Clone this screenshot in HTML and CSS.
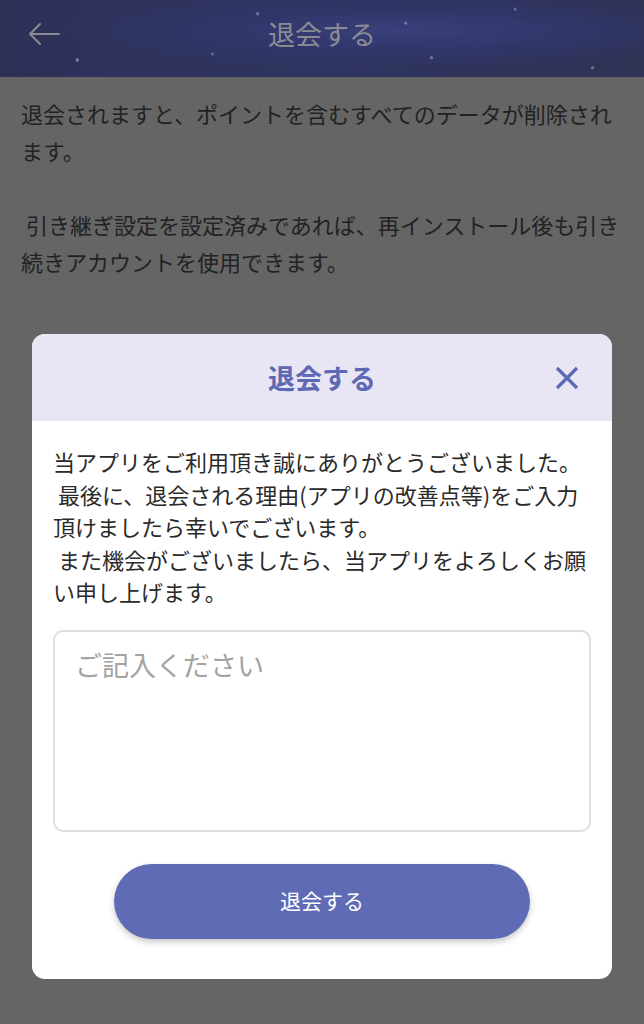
FILE: index.html
```html
<!DOCTYPE html>
<html lang="ja">
<head>
  <meta charset="UTF-8" />
  <meta name="viewport" content="width=device-width, initial-scale=1.0"/>
  <title>退会する</title>
  <link rel="stylesheet" href="styles.css">
</head>
<body>
  <header class="topbar">
    <button class="back" aria-label="戻る">
      <svg width="34" height="26" viewBox="0 0 34 26">
        <path d="M32 13H3M13 3L3 13l10 10" fill="none" stroke="currentColor" stroke-width="2" stroke-linecap="round" stroke-linejoin="round"/>
      </svg>
    </button>
    <h1>退会する</h1>
  </header>

  <main class="notice">
    <p>退会されますと、ポイントを含むすべてのデータが削除されます。</p>
    <p>&nbsp;引き継ぎ設定を設定済みであれば、再インストール後も引き続きアカウントを使用できます。</p>
  </main>

  <div class="overlay">
    <div class="dialog">
      <div class="dialog-head">
        <h2>退会する</h2>
        <button class="close" aria-label="閉じる">
          <svg width="24" height="24" viewBox="0 0 24 24">
            <path d="M2 2L22 22M22 2L2 22" fill="none" stroke="currentColor" stroke-width="3.2"/>
          </svg>
        </button>
      </div>
      <div class="dialog-body">
        <p>当アプリをご利用頂き誠にありがとうございました。<br>&nbsp;最後に、退会される理由(アプリの改善点等)をご入力<br>頂けましたら幸いでございます。<br>&nbsp;また機会がございましたら、当アプリをよろしくお願<br>い申し上げます。</p>
        <textarea placeholder="ご記入ください"></textarea>
        <button class="submit">退会する</button>
      </div>
    </div>
  </div>
</body>
</html>
```

FILE: styles.css
```css
body {
  font-family: "Noto Sans CJK JP", "Noto Sans", sans-serif;
  margin: 0;
  background: #656565;
  color: #222;
}
button {
  font-family: inherit;
  border: none;
  background: none;
  padding: 0;
  cursor: pointer;
}

/* top bar (dimmed behind the dialog) */
.topbar {
  height: 67px;
  padding-bottom: 10px;
  display: flex;
  align-items: center;
  justify-content: center;
  position: relative;
  background:
    radial-gradient(circle at 12% 78%, rgba(255,255,255,0.35) 0 1.5px, transparent 2px),
    radial-gradient(circle at 40% 18%, rgba(255,255,255,0.3) 0 1.2px, transparent 2px),
    radial-gradient(circle at 63% 30%, rgba(255,255,255,0.3) 0 1.2px, transparent 2px),
    radial-gradient(circle at 67% 75%, rgba(255,255,255,0.3) 0 1.2px, transparent 2px),
    radial-gradient(circle at 80% 12%, rgba(255,255,255,0.25) 0 1px, transparent 2px),
    radial-gradient(circle at 92% 88%, rgba(255,255,255,0.3) 0 1.2px, transparent 2px),
    radial-gradient(circle at 33% 70%, rgba(255,255,255,0.25) 0 1px, transparent 2px),
    radial-gradient(ellipse at 62% 40%, #39407a 0%, #31366a 30%, transparent 60%),
    linear-gradient(90deg, #2d3158 0%, #2f3460 50%, #2e3253 100%);
}
.topbar h1 {
  margin: 0;
  font-size: 27px;
  font-weight: 400;
  color: #8b8b93;
}
.back {
  position: absolute;
  left: 27px;
  top: 21px;
  color: #8a8a90;
}

.notice {
  padding: 18px 21px 0;
  font-size: 22px;
  line-height: 37px;
}
.notice p {
  margin: 0;
}
.notice p + p {
  margin-top: 37px;
}

/* dialog */
.overlay {
  position: fixed;
  inset: 0;
  padding: 334px 32px 0;
}
.dialog {
  background: #fff;
  border-radius: 13px;
  overflow: hidden;
}
.dialog-head {
  height: 87px;
  background: #e8e5f4;
  display: grid;
  grid-template-columns: 1fr auto 1fr;
  align-items: center;
}
.dialog-head h2 {
  grid-column: 2;
  margin: 0;
  font-size: 27px;
  font-weight: 700;
  color: #5e69b4;
}
.close {
  justify-self: end;
  margin-right: 33px;
  color: #5e69b4;
  display: flex;
}
.dialog-body {
  padding: 24px 21px 40px;
}
.dialog-body p {
  margin: 0;
  font-size: 22px;
  line-height: 32.5px;
  color: #2a2a2a;
}
textarea {
  display: block;
  box-sizing: border-box;
  width: 100%;
  height: 202px;
  margin-top: 22px;
  padding: 14px 20px;
  border: 2px solid #dedede;
  border-radius: 10px;
  font-family: inherit;
  font-size: 27px;
  line-height: 38px;
  resize: none;
  outline: none;
}
textarea::placeholder {
  color: #a3a3a3;
}
.submit {
  display: block;
  width: 416px;
  height: 75px;
  margin: 32px auto 0;
  padding-bottom: 2px;
  border-radius: 38px;
  background: #606bb6;
  color: #fff;
  font-size: 21px;
  box-shadow: 0 3px 6px rgba(0,0,0,0.22);
}
```
